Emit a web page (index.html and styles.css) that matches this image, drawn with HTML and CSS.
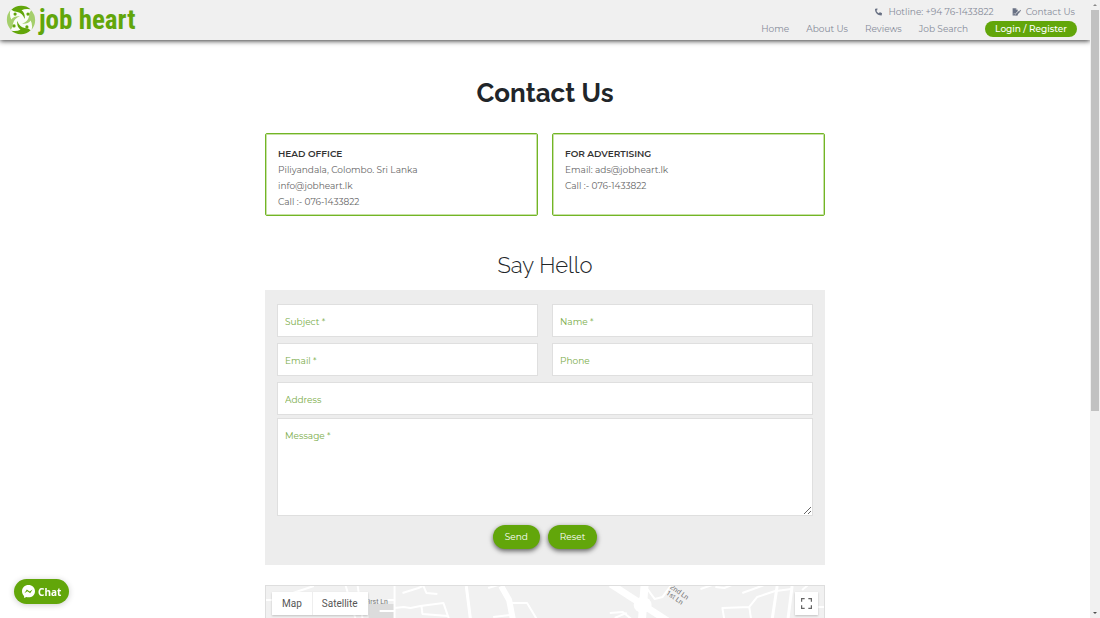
FILE: index.html
```
<!DOCTYPE html>
<html lang="en">
<head>
  <meta charset="UTF-8">
  <meta name="viewport" content="width=device-width, initial-scale=1.0">
  <title>Contact Us | Job Heart</title>
  <link rel="stylesheet" href="styles.css">
</head>
<body>
  <div class="page">
    <header class="header">
      <a class="logo" href="#">
        <svg class="logo-mark" viewBox="0 0 56 56" aria-hidden="true">
          <circle cx="28" cy="28" r="25" fill="#fafcf7"/>
          <g fill="#62a60a">
            <path id="arm" d="M10 9A27 27 0 0 1 46 8Q36 6 29 10Q36 15 35 26Q31 15 21 13Q14 13 10 9z"/>
            <use href="#arm" transform="rotate(180 28 28)"/>
          </g>
          <g fill="#a5cf6c">
            <use href="#arm" transform="rotate(90 28 28)"/>
            <use href="#arm" transform="rotate(270 28 28)"/>
          </g>
          <g fill="#62a60a">
            <circle cx="41" cy="17" r="3"/>
            <circle cx="39" cy="41" r="3"/>
            <circle cx="15" cy="39" r="3"/>
            <circle cx="17" cy="17" r="3"/>
          </g>
        </svg>
        <span class="logo-text">job heart</span>
      </a>

      <div class="header-links">
        <div class="top-links">
          <a href="#">
            <svg class="icon" viewBox="0 0 512 512" aria-hidden="true">
              <path d="M160 30l-105 24c-14 3-23 15-23 29 0 220 178 398 398 398 14 0 26-9 29-23l22-100c3-15-4-29-18-35l-108-45c-12-5-26-2-34 8l-44 54c-70-34-127-90-160-160l54-44c10-8 13-22 8-34L195 48c-6-14-20-21-35-18z"/>
            </svg>
            Hotline: +94 76-1433822
          </a>
          <a href="#">
            <svg class="icon" viewBox="0 0 576 512" aria-hidden="true">
              <path d="M40 20h210v115h115v75L220 355v75h80l65-65v115H40z"/>
              <path d="M275 20l90 90h-90zM455 175l70 70-215 215-80 10 10-80zM480 150l25-25q12-12 25 0l45 45q12 12 0 25l-25 25z"/>
              <path d="M90 390h35l20-45 30 50h40" fill="none" stroke="#f0f0f0" stroke-width="24"/>
            </svg>
            Contact Us
          </a>
        </div>
        <nav class="nav">
          <a href="#">Home</a>
          <a href="#">About Us</a>
          <a href="#">Reviews</a>
          <a href="#">Job Search</a>
          <a class="login" href="#">Login / Register</a>
        </nav>
      </div>
    </header>

    <main class="content">
      <h1>Contact Us</h1>

      <div class="offices">
        <section class="office">
          <h2>HEAD OFFICE</h2>
          <p>Piliyandala, Colombo. Sri Lanka</p>
          <p>info@jobheart.lk</p>
          <p>Call :- 076-1433822</p>
        </section>
        <section class="office">
          <h2>FOR ADVERTISING</h2>
          <p>Email: ads@jobheart.lk</p>
          <p>Call :- 076-1433822</p>
        </section>
      </div>

      <h3 class="form-title">Say Hello</h3>

      <form class="contact-form">
        <div class="fields">
          <input type="text" placeholder="Subject *" aria-label="Subject">
          <input type="text" placeholder="Name *" aria-label="Name">
          <input type="email" placeholder="Email *" aria-label="Email">
          <input type="tel" placeholder="Phone" aria-label="Phone">
          <input class="wide" type="text" placeholder="Address" aria-label="Address">
        </div>
        <textarea placeholder="Message *" aria-label="Message"></textarea>
        <div class="form-buttons">
          <button type="submit">Send</button>
          <button type="reset">Reset</button>
        </div>
      </form>

      <div class="map">
        <svg class="map-tiles" viewBox="0 0 560 300" preserveAspectRatio="xMidYMin slice" aria-hidden="true">
          <rect width="560" height="300" fill="#f1f1f1"/>
          <path d="M103 18h26v60h-26z" fill="#dcdcdc"/>
          <g fill="none" stroke="#fff" stroke-width="2" stroke-linejoin="round">
            <path d="M27 7L48 0M80 0l12 40M92 0l6 40M0 14h8"/>
            <path d="M129 0v60M129 22l9-1 7 1 10-2 23-3 7 20M156 20l1 8 26 2M114 25h15M122 14h8"/>
            <path d="M137 7l16-5 4-2M158 0l3 7 11 1"/>
            <path d="M247 17h15l12 20M228 31l18-2"/>
            <path d="M223 2l10-3M345 27l13-1 11 9M350 32l12-5"/>
            <path d="M382 2l8 11 8-2 8-11"/>
            <path d="M436 3l12-4M451 1l9 1 10-4M478 7l22-8"/>
            <path d="M461 40l-3-18 27-1 8-10 18-6M485 21l3 20M512 5l15-2M545 21h15M538 4l6-5"/>
          </g>
          <g fill="none" stroke="#fff" stroke-linejoin="round">
            <path d="M201 0l5 40" stroke-width="3"/>
            <path d="M513 0l-6 40M528 0l-5 40" stroke-width="3"/>
            <path d="M236 0l8 14 5 26" stroke-width="6"/>
            <path d="M346-2l26 17 34 22" stroke-width="7"/>
            <path d="M380-2l-3 40" stroke-width="8"/>
          </g>
          <ellipse cx="378" cy="19" rx="9" ry="8" fill="#fff"/>
          <g class="map-labels">
            <text x="99" y="18">First Ln</text>
            <text transform="translate(405 2) rotate(35)">2nd Ln</text>
            <text transform="translate(401 8) rotate(35)">1st Ln</text>
          </g>
        </svg>
        <div class="map-controls">
          <div class="map-type">
            <button type="button">Map</button>
            <button type="button">Satellite</button>
          </div>
          <button class="fullscreen" type="button" aria-label="Toggle fullscreen view">
            <svg viewBox="0 0 18 18" aria-hidden="true">
              <path d="M0 0v6h2V2h4V0H0zm16 0h-4v2h4v4h2V0h-2zm0 16h-4v2h6v-6h-2v4zM2 12H0v6h6v-2H2v-4z" fill="#666"/>
            </svg>
          </button>
        </div>
      </div>
    </main>
  </div>

  <!-- page scrollbar -->
  <div class="scrollbar" aria-hidden="true">
    <svg viewBox="0 0 10 10"><path d="M3 6h4L5 4z" fill="#8a8a8a"/></svg>
    <div class="scroll-track"><div class="scroll-thumb"></div></div>
    <svg viewBox="0 0 10 10"><path d="M3 4h4L5 6z" fill="#505050"/></svg>
  </div>

  <button class="chat" type="button">
    <svg viewBox="0 0 24 24" aria-hidden="true">
      <path d="M12 0C5.200 0 0 5 0 11.700c0 3.500 1.400 6.500 3.800 8.600L4 24l4-1.800c1.200.4 2.600.5 4 .5 6.800 0 12-4.700 12-11.300S18.800 0 12 0z" fill="#fff"/>
      <path d="M4.500 15.200l4.400-7 5.200 3.600 5.400-3.600-4.400 7-5.200-3.600z" fill="#62a60a"/>
    </svg>
    Chat
  </button>
</body>
</html>
```
FILE: styles.css
```
* {
  box-sizing: border-box;
}

body {
  margin: 0;
  height: 100vh;
  display: flex;
  overflow: hidden;
  background: #fff;
  color: #666;
  font-family: Montserrat, Inter, sans-serif;
  font-size: 9px;
  line-height: 16px;
}

h1, h2, h3, p {
  margin: 0;
}

a {
  color: inherit;
  text-decoration: none;
}

button {
  border: 0;
  font-family: inherit;
  cursor: pointer;
}

.page {
  flex: 1;
  overflow: hidden;
}

/* header */
.header {
  display: flex;
  justify-content: space-between;
  height: 40px;
  padding: 0 13px 0 6px;
  background: #f0f0f0;
  box-shadow: 0 1px 5px rgba(0, 0, 0, 0.8);
}

.logo {
  display: flex;
  align-items: center;
  gap: 3px;
  color: #62a60a;
}

.logo-mark {
  width: 30px;
  height: 30px;
}

.logo-text {
  font-family: "Roboto Condensed", "Liberation Sans", sans-serif;
  font-size: 27px;
  line-height: 36px;
  font-weight: bold;
}

.header-links {
  display: flex;
  flex-direction: column;
  padding-top: 4px;
  color: #858a98;
  font-size: 9px;
}

.top-links {
  display: flex;
  justify-content: flex-end;
  gap: 18px;
  padding-right: 2px;
}

.top-links a {
  display: flex;
  align-items: center;
  gap: 5px;
}

.icon {
  width: 9px;
  height: 8px;
  fill: #687083;
}

.nav {
  display: flex;
  justify-content: flex-end;
  align-items: center;
  gap: 17px;
  margin-top: 1px;
}

.login {
  padding: 0 10px;
  border-radius: 9px;
  background: #62a60a;
  color: #fff;
  font-weight: 500;
}

/* content */
.content {
  max-width: 560px;
  margin: 0 auto;
}

h1 {
  padding: 37px 0 24px;
  color: #212529;
  font-family: Raleway, Lato, sans-serif;
  font-size: 26px;
  line-height: 32px;
  text-align: center;
}

.offices {
  display: grid;
  grid-template-columns: 1fr 1fr;
  gap: 14px;
}

.office {
  padding: 12px 12px 5px;
  border: 1px solid #72b526;
  border-radius: 2px;
  box-shadow: inset 0 0 0 1px #c8e2a6;
}

.office h2 {
  color: #333;
  font-size: 9px;
  line-height: 16px;
  font-weight: 600;
}

.form-title {
  padding: 35px 0 11px;
  color: #212529;
  font-family: Raleway, Lato, sans-serif;
  font-size: 22px;
  line-height: 28px;
  font-weight: 300;
  text-align: center;
}

.contact-form {
  padding: 14px 12px 16px;
  background: #ededed;
}

.fields {
  display: grid;
  grid-template-columns: 1fr 1fr;
  gap: 6px 14px;
}

.wide {
  grid-column: 1 / -1;
}

input, textarea {
  width: 100%;
  border: 1px solid #dfdfdf;
  border-radius: 0;
  background: #fff;
  font-family: inherit;
  font-size: 9px;
  line-height: 16px;
}

input {
  height: 33px;
  padding: 1px 7px 0;
}

textarea {
  display: block;
  height: 98px;
  margin-top: 3px;
  padding: 9px 7px;
  resize: vertical;
}

::placeholder {
  color: #7aac48;
  opacity: 1;
}

.form-buttons {
  display: flex;
  justify-content: center;
  gap: 8px;
  margin-top: 9px;
}

.form-buttons button {
  padding: 4px 12px;
  border-radius: 12px;
  background: #62a60a;
  box-shadow: 0 2px 5px rgba(0, 0, 0, 0.6);
  color: #fff;
  font-size: 9px;
  line-height: 16px;
}

/* map */
.map {
  position: relative;
  height: 300px;
  margin-top: 20px;
  border: 1px solid #dedede;
  font-family: Roboto, sans-serif;
}

.map-tiles {
  display: block;
  width: 100%;
  height: 100%;
}

.map-labels {
  fill: #777;
  font-size: 7px;
}

.map-controls {
  position: absolute;
  top: 6px;
  left: 6px;
  right: 6px;
  display: flex;
  justify-content: space-between;
}

.map-controls button {
  background: #fff;
  color: #565656;
  font-size: 10px;
  line-height: 23px;
}

.map-type {
  display: flex;
  box-shadow: 0 1px 2px rgba(0, 0, 0, 0.2);
}

.map-type button {
  padding: 0 10px;
}

.map-type button + button {
  padding-left: 9px;
  border-left: 1px solid #eee;
}

.map-controls .fullscreen {
  display: flex;
  align-items: center;
  justify-content: center;
  width: 23px;
  height: 23px;
  padding: 0;
  box-shadow: 0 1px 2px rgba(0, 0, 0, 0.2);
}

.fullscreen svg {
  width: 11px;
  height: 11px;
}

/* scrollbar */
.scrollbar {
  display: flex;
  flex-direction: column;
  width: 10px;
  background: #f1f1f1;
}

.scroll-track {
  flex: 1;
  padding: 0 1px;
}

.scroll-thumb {
  height: 67%;
  background: #c1c1c1;
}

/* chat bubble */
.chat {
  position: fixed;
  left: 14px;
  bottom: 14px;
  display: flex;
  align-items: center;
  gap: 3px;
  height: 25px;
  padding: 0 8px;
  border-radius: 13px;
  background: #62a60a;
  box-shadow: 0 1px 6px rgba(0, 0, 0, 0.2);
  color: #fff;
  font-family: "Noto Sans", sans-serif;
  font-size: 10px;
  font-weight: bold;
}

.chat svg {
  width: 13px;
  height: 13px;
}
```
